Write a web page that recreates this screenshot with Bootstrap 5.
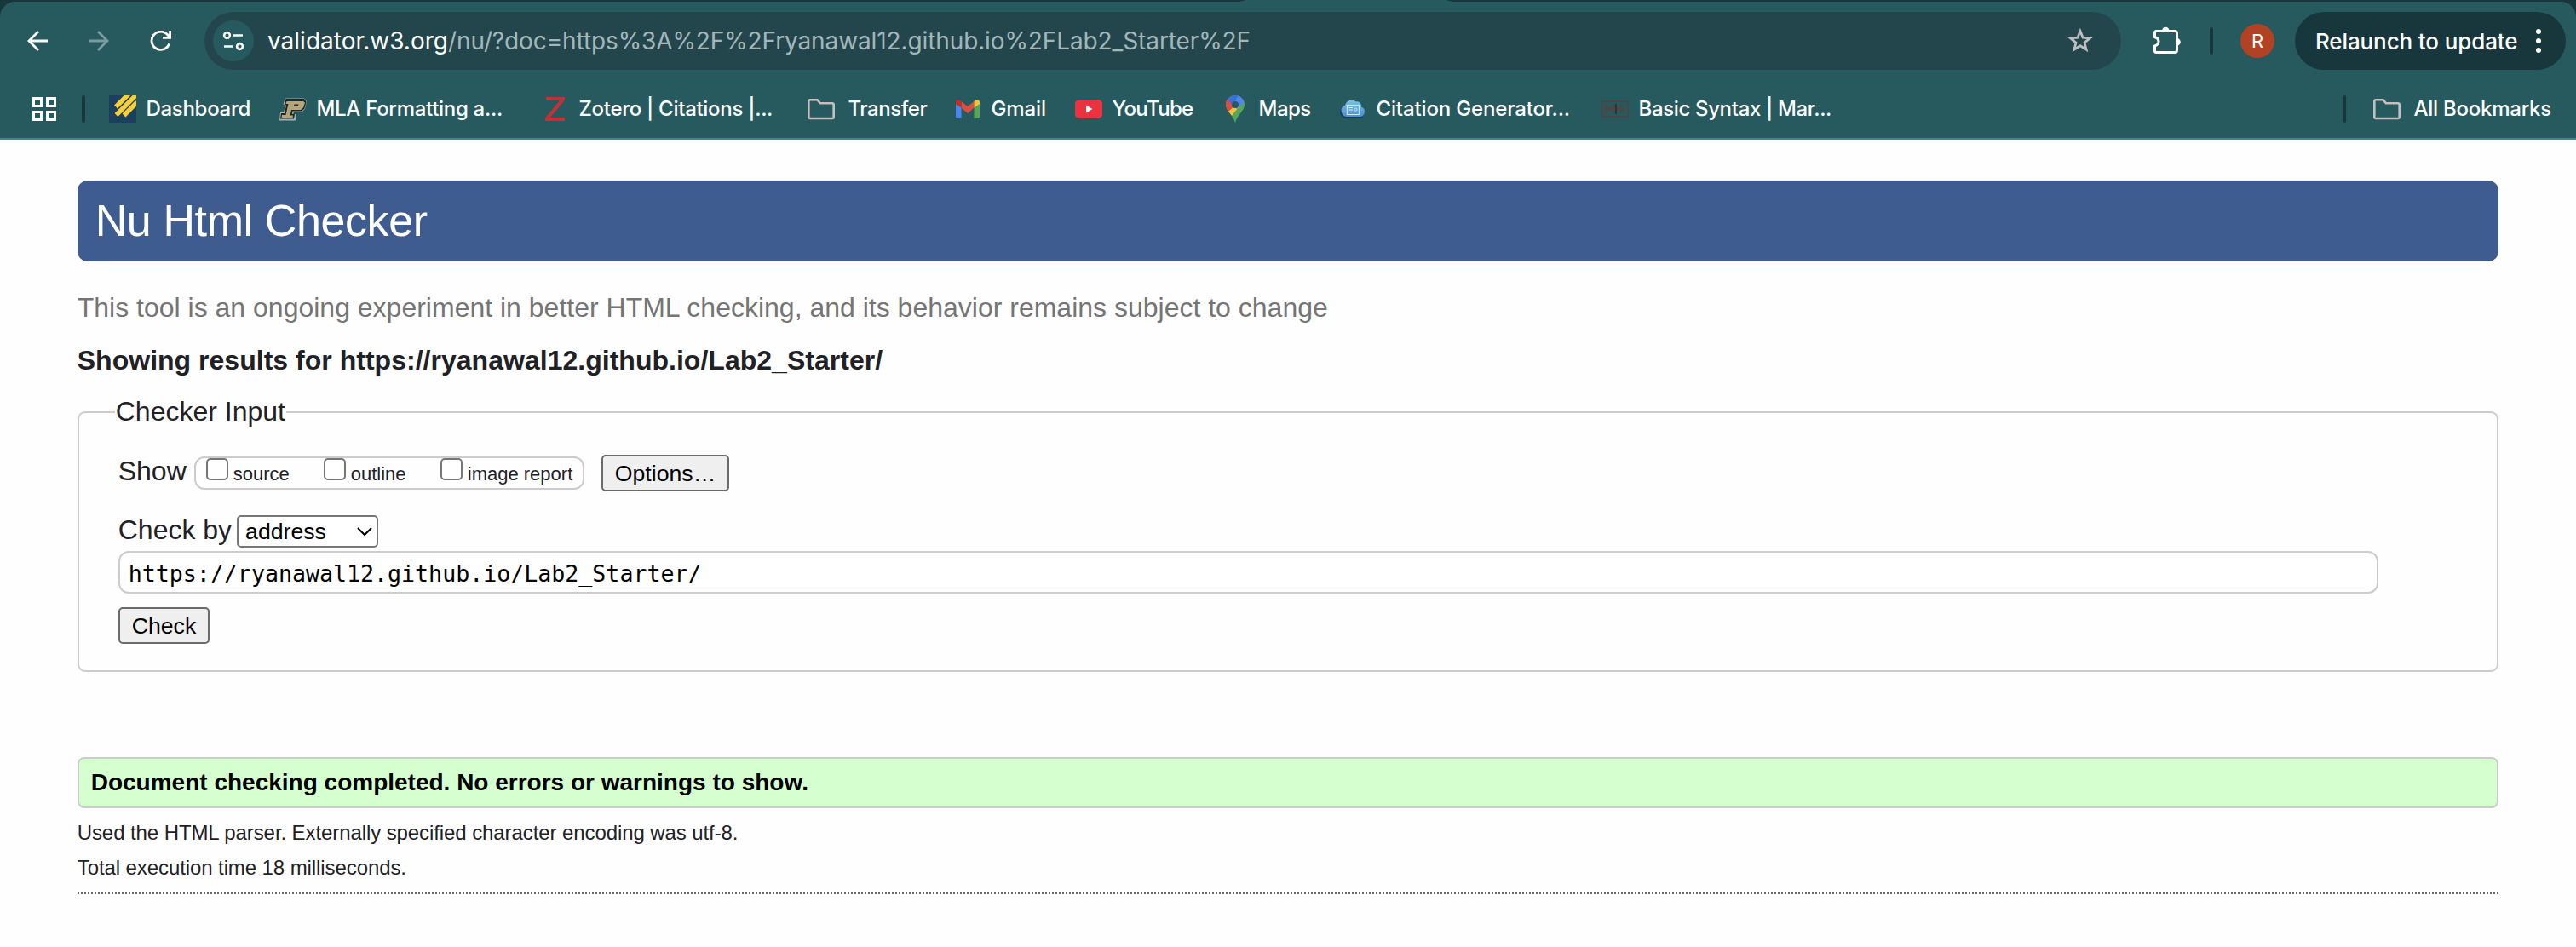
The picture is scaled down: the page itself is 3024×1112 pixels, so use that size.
<!DOCTYPE html>
<html lang="en">
<head>
<meta charset="utf-8">
<title>Nu Html Checker</title>
<meta name="viewport" content="width=device-width, initial-scale=1">
<link href="https://cdn.jsdelivr.net/npm/bootstrap@5.3.0/dist/css/bootstrap.min.css" rel="stylesheet">
<script src="https://cdn.jsdelivr.net/npm/bootstrap@5.3.0/dist/js/bootstrap.bundle.min.js"></script>
<style>
  body { font-family: "Liberation Sans", Arial, sans-serif; color: #1f2126; background: #fefefe; }
  svg { display: block; flex: none; }

  /* browser chrome */
  .chrome { background: #17373c; font-family: Inter, sans-serif; color: #fff; }
  .tab-strip { height: 2px; padding-left: 1450px; }
  .chrome-body { background: #265a5f; border-radius: 18px 18px 0 0; border-bottom: 2px solid #4d8088; height: 162px; }
  .toolbar-row { height: 92px; padding: 0 12px 0 32px; }
  .nav-icons { gap: 48px; width: 208px; }
  .omnibox { background: #22464c; height: 68px; width: 2250px; border-radius: 34px; padding: 0 33px 0 10px; font-size: 28px; line-height: 40px; }
  .site-info { width: 48px; height: 48px; background: #265a5f; margin-right: 16px; }
  .url-path { color: #a3b6b9; letter-spacing: -.11px; }
  .divider { width: 4px; height: 32px; border-radius: 2px; background: #17373c; flex: none; }
  .avatar { width: 40px; height: 40px; background: #b14223; font-size: 22px; }
  .relaunch { background: #17373c; height: 68px; border-radius: 34px; width: 318px; padding: 0 29px 0 24px; font-size: 26px; font-weight: 500; letter-spacing: -.12px; }
  .bookmark-row { height: 68px; padding: 0 28px 0 36px; font-size: 24px; font-weight: 500; }
  .bm { display: flex; align-items: center; gap: 11.5px; white-space: nowrap; letter-spacing: -.3px; flex: none; }
  .bm-folder { gap: 15.5px; }

  /* checker page */
  .page { padding: 48px 3% 0; }
  .banner { height: 95px; background: #3f5c91; color: #fff; border-radius: 12px; padding-left: 20px; font-size: 52px; letter-spacing: -.4px; line-height: 95px; font-weight: 400; padding-left: 21px; }
  .tagline { margin: 34px 0 0; font-size: 32px; line-height: 40px; color: #757575; }
  .subject { margin: 22px 0 0; font-size: 32px; line-height: 40px; font-weight: 700; letter-spacing: .02px; }
  .checker { margin-top: 20px; height: 326px; border: 2px solid #ccc; border-radius: 9px; padding: 0 42px; font-size: 32px; }
  .checker legend { float: none; width: auto; margin: 0; padding: 0 1px 0 1px; font-size: 32px; line-height: 41px; }
  .checker-body { padding: 30px 0 0 4px; }
  .row-label { line-height: 38px; padding-bottom: 5px; white-space: pre; }
  .show-set { margin-left: 9px; height: 39px; width: 458px; border: 2px solid #ccc; border-radius: 12px; font-size: 22px; padding-left: 12px; }
  .show-set label { display: flex; align-items: center; gap: 6px; line-height: 35px; padding-top: 1px; white-space: nowrap; }
  .tick { appearance: none; width: 26px; height: 26px; margin: -1px 0 0; border: 2px solid #767676; border-radius: 5px; background: #fff; align-self: flex-start; }
  .push { height: 43px; border: 2px solid #6b6b6b; border-radius: 5px; background: #efefef; color: #000; font-size: 26.67px; line-height: 38px; padding: 0 14px; }
  .method { appearance: none; width: 166px; height: 38px; border: 2px solid #767676; border-radius: 5px; background: #fff; color: #000; font-size: 26.67px; line-height: 32px; padding: 0 0 0 8px; }
  .method-wrap { margin-left: 6px; }
  .method-wrap svg { position: absolute; right: 7px; top: 14px; }
  .address { display: block; width: 2653.5px; height: 50px; margin-top: 4px; border: 2px solid #ccc; border-radius: 12px; background: #fff; color: #000; font: 26.67px "DejaVu Sans Mono", monospace; padding: 2px 10px 0; letter-spacing: -.03px; }
  .success-box { margin-top: 100px; height: 60px; border: 2px solid #ccc; border-radius: 8px; background: #d6ffd0; color: #000; font-size: 28px; font-weight: 700; line-height: 56px; padding-left: 14px; }
  .detail { margin: 9px 0 0; font-size: 24px; line-height: 40px; letter-spacing: -.09px; }
  .detail + .detail { margin-top: 1px; }
  .end-line { margin-top: 9px; height: 2px; background: repeating-linear-gradient(90deg, #666 0 2px, transparent 2px 4px); }
</style>
</head>
<body>
<header class="chrome">
  <div class="tab-strip">
    <svg width="264" height="2" viewBox="0 0 264 2"><path d="M0 2Q8 2 12 0H248Q252 2 260 2Z" fill="#265a5f"/></svg>
  </div>
  <div class="chrome-body">
    <div class="toolbar-row d-flex align-items-center">
      <div class="nav-icons d-flex align-items-center">
        <svg width="24" height="24" viewBox="0 0 24 24" fill="none" stroke="#fff" stroke-width="2.8"><path d="M24 12H2M13 1L2 12L13 23"/></svg>
        <svg width="24" height="24" viewBox="0 0 24 24" fill="none" stroke="#7c9b9e" stroke-width="2.8"><path d="M0 12H22M11 1L22 12L11 23"/></svg>
        <svg width="26" height="24" viewBox="0 0 26 24" fill="none" stroke="#fff" stroke-width="2.8"><path d="M22.6 15.5A10.6 10.6 0 1 1 20.6 4.8L23 7.5"/><path d="M23.6 0V8.4H15"/></svg>
      </div>
      <div class="omnibox d-flex align-items-center">
        <div class="site-info rounded-circle d-flex align-items-center justify-content-center">
          <svg width="26" height="24" viewBox="0 0 26 24" fill="none" stroke="#fff" stroke-width="2.6"><circle cx="5.5" cy="5.5" r="3.4"/><path d="M12.5 5.5H24M2 18.5H13"/><circle cx="20.5" cy="18.5" r="3.4"/></svg>
        </div>
        <span>validator.w3.org</span><span class="url-path">/nu/?doc=https%3A%2F%2Fryanawal12.github.io%2FLab2_Starter%2F</span>
        <svg class="ms-auto" width="30" height="30" viewBox="0 0 30 30"><path d="M15 3.5L18.1 11.2L26.4 11.8L20 17.1L22.1 25.2L15 20.7L7.9 25.2L10 17.1L3.6 11.8L11.9 11.2Z" fill="none" stroke="#bdbdbf" stroke-width="2.8"/></svg>
      </div>
      <svg width="34" height="34" viewBox="0 0 34 34" style="margin-left:37px"><path d="M4.5 5.500H26Q28.500 5.500 28.500 8V28Q28.500 30.500 26 30.500H4.500Q2.500 30.500 2.500 28.500V23C8.500 21 8.500 14.500 2.500 12.500V7.500Q2.500 5.500 4.500 5.500Z" fill="none" stroke="#fff" stroke-width="3"/><path d="M11 5A4.300 4.300 0 0 1 19.600 5ZM28.500 14A4.300 4.300 0 0 1 28.500 22.600Z" fill="#fff"/></svg>
      <div class="divider" style="margin-left:33px"></div>
      <div class="avatar rounded-circle d-flex align-items-center justify-content-center" style="margin-left:32px">R</div>
      <div class="relaunch d-flex align-items-center justify-content-between ms-auto">
        <span>Relaunch to update</span>
        <svg width="6" height="30" viewBox="0 0 6 30" fill="#fff"><circle cx="3" cy="4" r="3"/><circle cx="3" cy="15" r="3"/><circle cx="3" cy="26" r="3"/></svg>
      </div>
    </div>
    <nav class="bookmark-row d-flex align-items-center">
      <svg width="32" height="32" viewBox="0 0 32 32" fill="none" stroke="#fff" stroke-width="3" style="margin-right:28px"><path d="M3.500 3.500h9v9h-9zM19.500 3.500h9v9h-9zM3.500 19.500h9v9h-9zM19.500 19.500h9v9h-9z"/></svg>
      <div class="divider" style="margin-right:28px"></div>
      <span class="bm" style="width:200px;letter-spacing:-.3px">
        <svg width="32" height="32" viewBox="0 0 32 32"><path fill="#1c3f5f" d="M0 0H32V32H0Z"/><path d="M8 13.500L23 -1.500M8.500 23L33 -1.500M17.500 23.500L33 8" stroke="#f7d038" stroke-width="5.400"/></svg>Dashboard</span>
      <span class="bm" style="width:308px">
        <svg width="32" height="32" viewBox="0 0 32 32"><path d="M1 20H5L7 11H4.500L6.500 3.500H29L32 7L30 16L26 19.500H17L16 22H20L19 29.500H0Z" fill="#9fb3b4"/><path d="M2 21H6L8 11.500H5.500L7.500 4H29L31.500 7.500L29.500 15.500L26 18.500H15.500L15 22H18L17 27.500H1Z" fill="#22282a"/><path d="M3 23H7.500L10.500 10H7.500L8.500 7H28L30 8.500L28 14.500L25 17H14L12.500 23.500H16L15.500 26H2.500Z" fill="#b5a57b"/><path d="M17.500 10.500H22.500L22 13H17Z" fill="#22282a"/></svg>MLA Formatting a...</span>
      <span class="bm" style="width:312px">
        <svg width="32" height="32" viewBox="0 0 32 32"><path d="M5 2H27V5.500L10 26H27V30H4V26.500L21 6H5Z" fill="#c23137"/></svg>Zotero | Citations |...</span>
      <span class="bm bm-folder" style="width:172px;letter-spacing:-.45px">
        <svg width="32" height="26" viewBox="0 0 32 26" fill="none" stroke="#c4c0c0" stroke-width="2.600"><path d="M3 2.300H11.500L15 6.300H29Q30.700 6.300 30.700 8V22.500Q30.700 24 29 24H3Q1.300 24 1.300 22.500V4Q1.300 2.300 3 2.300Z"/></svg>Transfer</span>
      <span class="bm" style="width:142px;letter-spacing:-.1px">
        <svg width="32" height="32" viewBox="0 0 32 32"><path d="M2 8V25Q2 27 4 27H8.500V14Z" fill="#4f86ec"/><path d="M30 8V25Q30 27 28 27H23.500V14Z" fill="#57a55a"/><path d="M8.500 7L16 13L23.500 7V14.500L16 21L8.500 14.500Z" fill="#dc4e41"/><path d="M2 8.500Q2 5 5 5Q6.500 5 8.500 7V14.500L2 10Z" fill="#b8322a"/><path d="M30 8.500Q30 5 27 5Q25.500 5 23.500 7V14.500L30 10Z" fill="#f5c33b"/></svg>Gmail</span>
      <span class="bm" style="width:172px;letter-spacing:-.65px">
        <svg width="32" height="32" viewBox="0 0 32 32"><rect y="5" width="32" height="22" rx="5" fill="#ea3340"/><path d="M13 11.500V20.500L20.500 16Z" fill="#fff"/></svg>YouTube</span>
      <span class="bm" style="width:138px;letter-spacing:-.5px">
        <svg width="32" height="32" viewBox="0 0 32 32"><defs><clipPath id="pin"><path d="M16 0A11 11 0 0 1 27 11C27 18 19 22 16 32C13 22 5 18 5 11A11 11 0 0 1 16 0Z"/></clipPath></defs><g clip-path="url(#pin)"><path d="M0 0H32V32H0Z" fill="#57a55a"/><path d="M5 18L16 9L20 14L10 26L3 24Z" fill="#f5c33b"/><path d="M4 5L8 4L17 11L8 19L3 20Z" fill="#dc4e41"/><path d="M7 4L16 -2L22 1L13 12Z" fill="#3a6fd8"/><path d="M20 0L28 6L18 16L13 11Z" fill="#4f86ec"/></g><circle cx="16" cy="11" r="4" fill="#265a5f"/></svg>Maps</span>
      <span class="bm" style="width:308px;letter-spacing:-.15px">
        <svg width="32" height="32" viewBox="0 0 32 32"><defs><linearGradient id="sky" x2="0" y2="1"><stop stop-color="#7dc0ec"/><stop offset="1" stop-color="#4b8fd0"/></linearGradient></defs><path d="M9 26.500A7 7 0 0 1 7 12.500A8 8 0 0 1 20 8.500A5 5 0 0 1 26 14.500A6.500 6.500 0 0 1 25 26.500Z" fill="#1d3f52"/><path d="M9 25A7 7 0 0 1 7 11.500A8 8 0 0 1 20 7.500A5 5 0 0 1 26 13.500A6 6 0 0 1 25 25Z" fill="url(#sky)"/><path d="M9.500 11.500H23.500V22.500H9.500ZM11.500 14.500H16M11.500 17H16M11.500 19.500H19" fill="none" stroke="#cfe9fb" stroke-width="1.200"/><circle cx="19.500" cy="16.500" r="1.600" fill="none" stroke="#cfe9fb"/></svg>Citation Generator...</span>
      <span class="bm" style="letter-spacing:-.35px">
        <svg width="32" height="32" viewBox="0 0 32 32" fill="none" stroke="#4a4749"><path d="M1 7H31V25H1Z" stroke-width="2"/><path d="M5.500 21V12L10 17L14.500 12V21M23 11V19M18.500 16.500H27.500" stroke-width="3"/><path d="M17 10V22" stroke="#25393d" stroke-width="2"/></svg>Basic Syntax | Mar...</span>
      <div class="divider ms-auto" style="margin-right:32px"></div>
      <span class="bm bm-folder" style="letter-spacing:-.25px;width:210px">
        <svg width="32" height="26" viewBox="0 0 32 26" fill="none" stroke="#c4c0c0" stroke-width="2.600"><path d="M3 2.300H11.500L15 6.300H29Q30.700 6.300 30.700 8V22.500Q30.700 24 29 24H3Q1.300 24 1.300 22.500V4Q1.300 2.300 3 2.300Z"/></svg>All Bookmarks</span>
    </nav>
  </div>
</header>

<main class="page">
  <h1 class="banner m-0">Nu Html Checker</h1>
  <p class="tagline">This tool is an ongoing experiment in better HTML checking, and its behavior remains subject to change</p>
  <h2 class="subject">Showing results for https://ryanawal12.github.io/Lab2_Starter/</h2>
  <form>
    <fieldset class="checker">
      <legend>Checker Input</legend>
      <div class="checker-body">
        <div class="d-flex align-items-center">
          <span class="row-label">Show</span>
          <div class="show-set d-flex">
            <label style="width:138px"><input class="tick" type="checkbox">source</label>
            <label style="width:137px"><input class="tick" type="checkbox">outline</label>
            <label><input class="tick" type="checkbox">image report</label>
          </div>
          <button type="button" class="push" style="margin-left:20px">Options…</button>
        </div>
        <div class="d-flex align-items-center" style="height:38px;margin-top:28px">
          <span class="row-label">Check by</span>
          <div class="method-wrap position-relative d-flex">
            <select class="method"><option>address</option></select>
            <svg width="18" height="11" viewBox="0 0 18 11" fill="none" stroke="#000" stroke-width="2"><path d="M1 1L9 9L17 1"/></svg>
          </div>
        </div>
        <input class="address" type="text" value="https://ryanawal12.github.io/Lab2_Starter/">
        <button type="button" class="push d-block" style="margin-top:16px">Check</button>
      </div>
    </fieldset>
  </form>
  <div class="success-box">Document checking completed. No errors or warnings to show.</div>
  <p class="detail">Used the HTML parser. Externally specified character encoding was utf-8.</p>
  <p class="detail">Total execution time 18 milliseconds.</p>
  <div class="end-line"></div>
</main>
</body>
</html>
